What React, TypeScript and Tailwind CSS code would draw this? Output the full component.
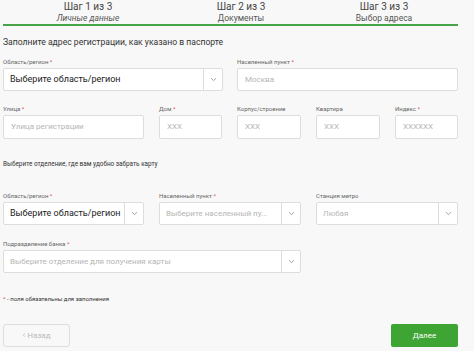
import React from "react";

const font = { fontFamily: "Roboto, 'Noto Sans', sans-serif" };

function Label({ text, req }: { text: string; req?: boolean }) {
  return (
    <div className="h-[11px] text-[6px] leading-[11px] text-[#666] mb-[1px] whitespace-nowrap">
      {text}
      {req && <span className="text-[#e05050]"> *</span>}
    </div>
  );
}

function Chevron() {
  return (
    <svg width="7" height="5" viewBox="0 0 7 5" fill="none">
      <path d="M1 1.2 L3.5 3.6 L6 1.2" stroke="#999" strokeWidth="0.9" />
    </svg>
  );
}

function Input({ value, w, h = "h-[23px]" }: { value: string; w: string; h?: string }) {
  return (
    <div className={`${w} ${h} bg-white border border-[#ddd] rounded-[2px] flex items-center px-[7px] text-[8px] text-[#b5b5b5] whitespace-nowrap overflow-hidden`}>
      {value}
    </div>
  );
}

function Select({ value, placeholder, w }: { value: string; placeholder?: boolean; w: string }) {
  return (
    <div className={`${w} h-[23px] bg-white border border-[#ddd] rounded-[2px] flex items-stretch overflow-hidden`}>
      <div className={`flex-1 min-w-0 flex items-center px-[6px] whitespace-nowrap overflow-hidden ${placeholder ? "text-[8px] text-[#b5b5b5]" : "text-[9px] text-[#222]"}`}>
        {value}
      </div>
      <div className="w-[19px] shrink-0 border-l border-[#ddd] flex items-center justify-center">
        <Chevron />
      </div>
    </div>
  );
}

function Field({ label, req, children, w }: { label: string; req?: boolean; children: React.ReactNode; w: string }) {
  return (
    <div className={`${w} flex flex-col`}>
      <Label text={label} req={req} />
      {children}
    </div>
  );
}

export default function App() {
  return (
    <div className="w-[474px] h-[351px] bg-[#f8f8f8] overflow-hidden relative" style={font}>
      {/* Steps header */}
      <div className="flex pl-[12px] pt-[1px]">
        <div className="w-[152px] flex flex-col items-center">
          <div className="text-[10px] leading-[12px] text-[#444]">Шаг 1 из 3</div>
          <div className="text-[8.5px] leading-[10px] text-[#555] italic">Личные данные</div>
        </div>
        <div className="w-[154px] flex flex-col items-center">
          <div className="text-[10px] leading-[12px] text-[#444]">Шаг 2 из 3</div>
          <div className="text-[8.5px] leading-[10px] text-[#555]">Документы</div>
        </div>
        <div className="w-[132px] flex flex-col items-center">
          <div className="text-[10px] leading-[12px] text-[#444]">Шаг 3 из 3</div>
          <div className="text-[8.5px] leading-[10px] text-[#555]">Выбор адреса</div>
        </div>
      </div>
      <div className="ml-[3px] w-[455px] h-[2px] bg-[#47a447] mt-[1px]" />

      <div className="pl-[3px] w-[461px]">
        <div className="text-[8.6px] leading-[12px] text-[#333] mt-[10px]">
          Заполните адрес регистрации, как указано в паспорте
        </div>

        <div className="flex gap-[14px] mt-[8px]">
          <Field w="w-[220px]" label="Область/регион" req>
            <Select w="w-[220px]" value="Выберите область/регион" />
          </Field>
          <Field w="w-[221px]" label="Населенный пункт" req>
            <Input w="w-[221px]" value="Москва" />
          </Field>
        </div>

        <div className="flex mt-[12px]">
          <Field w="w-[141px]" label="Улица" req>
            <Input w="w-[141px]" h="h-[24px]" value="Улица регистрации" />
          </Field>
          <div className="w-[15px]" />
          <Field w="w-[63px]" label="Дом" req>
            <Input w="w-[63px]" h="h-[24px]" value="XXX" />
          </Field>
          <div className="w-[15px]" />
          <Field w="w-[64px]" label="Корпус/строение">
            <Input w="w-[64px]" h="h-[24px]" value="XXX" />
          </Field>
          <div className="w-[15px]" />
          <Field w="w-[64px]" label="Квартира">
            <Input w="w-[64px]" h="h-[24px]" value="XXX" />
          </Field>
          <div className="w-[15px]" />
          <Field w="w-[63px]" label="Индекс" req>
            <Input w="w-[63px]" h="h-[24px]" value="XXXXXX" />
          </Field>
        </div>

        <div className="text-[6.4px] leading-[10px] text-[#333] mt-[20px]">
          Выберите отделение, где вам удобно забрать карту
        </div>

        <div className="flex mt-[21px]">
          <Field w="w-[141px]" label="Область/регион" req>
            <Select w="w-[141px]" value="Выберите область/регион" />
          </Field>
          <div className="w-[15px]" />
          <Field w="w-[142px]" label="Населенный пункт" req>
            <Select w="w-[142px]" value="Выберите населенный пу..." placeholder />
          </Field>
          <div className="w-[15px]" />
          <Field w="w-[142px]" label="Станция метро">
            <Select w="w-[142px]" value="Любая" placeholder />
          </Field>
        </div>

        <div className="flex mt-[13px]">
          <Field w="w-[298px]" label="Подразделение банка" req>
            <Select w="w-[298px]" value="Выберите отделение для получения карты" placeholder />
          </Field>
        </div>

        <div className="text-[6px] leading-[10px] text-[#333] mt-[21px]">
          <span className="text-[#e05050]">*</span> - поля обязательны для заполнения
        </div>

        <div className="flex justify-between mt-[20px] w-[455px]">
          <div className="w-[67px] h-[23px] border border-[#ddd] rounded-[3px] bg-[#f8f8f8] flex items-center justify-center text-[8px] text-[#bbb]">
            <span className="mr-[2px] text-[9px]">‹</span>Назад
          </div>
          <div className="w-[67px] h-[23px] rounded-[2px] bg-[#3ea534] flex items-center justify-center text-[8px] text-white">
            Далее
          </div>
        </div>
      </div>
    </div>
  );
}
